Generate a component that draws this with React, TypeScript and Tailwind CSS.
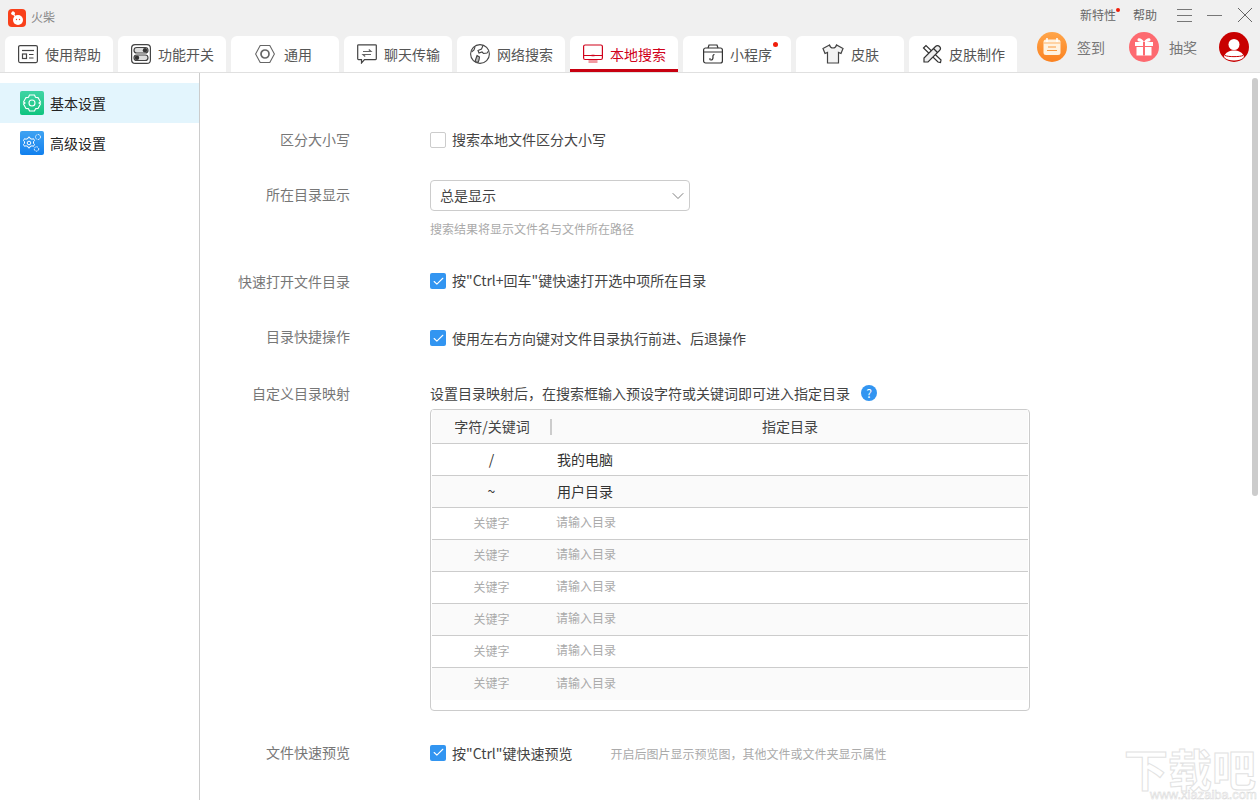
import type { ReactNode } from "react";
import { ChevronDown, Check } from "lucide-react";

const stroke = "#444";

function HelpIcon() {
  return (
    <svg width="20" height="20" viewBox="0 0 20 20" fill="none" stroke={stroke} strokeWidth="1.2">
      <rect x="0.6" y="1.6" width="18.8" height="17" rx="1.5" />
      <path d="M4 6.5h12" />
      <rect x="4.5" y="10" width="4" height="4.5" />
      <path d="M11 10.5h4.5M11 14h4.5" />
    </svg>
  );
}

function SwitchIcon() {
  return (
    <svg width="20" height="20" viewBox="0 0 20 20" fill="none" stroke={stroke} strokeWidth="1.2">
      <rect x="0.6" y="0.6" width="18.8" height="18.8" rx="3.5" />
      <rect x="3" y="3.5" width="14" height="5.5" rx="2.75" fill="#ddd" />
      <rect x="3" y="11" width="14" height="5.5" rx="2.75" fill="#ddd" />
      <circle cx="14" cy="6.2" r="2.2" fill="#333" stroke="none" />
      <circle cx="6" cy="13.8" r="2.2" fill="#333" stroke="none" />
    </svg>
  );
}

function NutIcon() {
  return (
    <svg width="20" height="20" viewBox="0 0 20 20" fill="none" stroke="#666" strokeWidth="1.1" className="mr-[2px] -ml-[4px]">
      <path d="M5.2 1.5h9.6L19.4 10l-4.6 8.500H5.200L.6 10z" />
      <circle cx="10" cy="10" r="4" strokeWidth="1.700" />
    </svg>
  );
}

function ChatIcon() {
  return (
    <svg width="20" height="20" viewBox="0 0 20 20" fill="none" stroke={stroke} strokeWidth="1.2">
      <path d="M1.5.8h17a.8.8 0 0 1 .8.8v13.2a.8.8 0 0 1-.8.8H7.5L4.5 19v-3.4h-3a.8.8 0 0 1-.8-.8V1.6a.8.8 0 0 1 .8-.8z" />
      <path d="M6 7.5h8L11.8 5.5M14 10.5H6l2.2 2" stroke="#666" />
    </svg>
  );
}

function GlobeIcon() {
  return (
    <svg width="20" height="20" viewBox="0 0 20 20" fill="none" stroke={stroke} strokeWidth="1.1">
      <circle cx="10" cy="10" r="9.4" />
      <path d="M13 1.5 11.5 5 8 6.5l1 2.5 3-1 1.500 1.500 3.500-.5L18.500 7" />
      <path d="M7 11.500l2.500 1.500-.5 3-1 2.500-3-1 1-3z" fill="#bbb" />
      <path d="M1.500 8 4 6l1-3" />
    </svg>
  );
}

function MonitorIcon() {
  return (
    <svg width="20" height="20" viewBox="0 0 20 20" fill="none">
      <rect x="0.6" y="1" width="18.8" height="14.500" rx="1.500" stroke="#d0021b" strokeWidth="1.200" />
      <path d="M1 11.500h18" stroke="#d0021b" strokeWidth="1" />
      <path d="M8.500 11.500h3" stroke="#d0021b" strokeWidth="1.500" />
      <rect x="5.500" y="16" width="9" height="3" fill="#f29aa2" />
    </svg>
  );
}

function MiniAppIcon() {
  return (
    <svg width="20" height="20" viewBox="0 0 20 20" fill="none" stroke="#333" strokeWidth="1.200">
      <rect x="0.600" y="4" width="18.800" height="15" rx="2" />
      <path d="M5 4 6 1h8l1 3M1 8h18" />
      <path d="M11.500 10.500c-2 0-1.500 2-1.500 3s-.5 2.500-2 2.500-1.500-1.500-.5-1.500" />
    </svg>
  );
}

function ShirtIcon() {
  return (
    <svg width="22" height="20" viewBox="0 0 22 20" fill="#f3f3f3" stroke="#444" strokeWidth="1.200">
      <path d="M7.500 1 1 4.500l2 5 2.500-1V19h11V8.500l2.500 1 2-5L14.500 1c-.5 2-1.800 3-3.500 3S8 3 7.500 1z" />
    </svg>
  );
}

function ToolsIcon() {
  return (
    <svg width="20" height="20" viewBox="0 0 20 20" fill="none" stroke="#333" strokeWidth="1.200">
      <path d="M1.500 4 4 1.500 19 16l-.5 2.500-2.500-.5z" />
      <path d="M13.500 2.500a2.500 2.500 0 0 1 4 4L6 18H2v-4z" fill="#eee" />
      <path d="M11.500 4.500l4 4" />
    </svg>
  );
}

function Logo() {
  return (
    <svg width="18" height="18" viewBox="0 0 18 18">
      <rect width="18" height="18" rx="4" fill="#f9401a" />
      <circle cx="10" cy="11" r="5" fill="#fff" />
      <rect x="3.500" y="2.500" width="3.500" height="3.500" rx="1.200" fill="#fff" transform="rotate(35 5 4)" />
      <path d="M6 5.500 7.500 8" stroke="#fff" strokeWidth="1.200" />
      <circle cx="8.500" cy="10.500" r=".7" fill="#f9401a" />
      <circle cx="11.500" cy="10.500" r=".7" fill="#f9401a" />
    </svg>
  );
}

function SignIcon() {
  return (
    <svg width="30" height="30" viewBox="0 0 30 30">
      <defs>
        <linearGradient id="signBg" x1="0" y1="0" x2="0" y2="1">
          <stop offset="0" stopColor="#ffa54a" />
          <stop offset="1" stopColor="#fb8220" />
        </linearGradient>
      </defs>
      <circle cx="15" cy="15" r="15" fill="url(#signBg)" />
      <rect x="6.500" y="7.500" width="17" height="15.500" rx="2.500" fill="#fff2e0" />
      <path d="M10 6v4M20 6v4" stroke="#fff" strokeWidth="1.500" />
      <path d="M6.500 11h17" stroke="#ffb469" strokeWidth="1" />
      <path d="M11 15h8M10 18.500h10" stroke="#fb9a3f" strokeWidth="1.200" />
    </svg>
  );
}

function GiftIcon() {
  return (
    <svg width="30" height="30" viewBox="0 0 30 30">
      <circle cx="15" cy="15" r="15" fill="#fd6a70" />
      <rect x="6" y="10" width="18" height="4" fill="#fff" />
      <rect x="7.500" y="15" width="15" height="8.500" fill="#fff" />
      <rect x="14" y="10" width="2" height="13.500" fill="#fd6a70" />
      <path d="M15 10c-2-4-6-4.500-6.500-2.500S11 10 15 10zM15 10c2-4 6-4.500 6.500-2.500S19 10 15 10z" fill="#fff" />
    </svg>
  );
}

function AvatarIcon() {
  return (
    <svg width="30" height="30" viewBox="0 0 30 30">
      <circle cx="15" cy="15" r="15" fill="#c80000" />
      <circle cx="15" cy="12.500" r="5.500" fill="#fff" />
      <path d="M5 25c1-5 6-6.500 10-6.500S24 20 25 25c-2.500 2.600-6 3.500-10 3.500S7.500 27.600 5 25z" fill="#fff" />
      <path d="M6 23.500c3 1.500 15 1.500 18 0" stroke="#c80000" strokeWidth="1" fill="none" />
    </svg>
  );
}

function GearTile({ blue }: { blue?: boolean }) {
  return (
    <div
      className={
        blue
          ? "w-6 h-6 rounded-[2px] bg-gradient-to-b from-[#3fa3f2] to-[#0f80ee] flex items-center justify-center"
          : "w-6 h-6 rounded-[2px] bg-gradient-to-b from-[#3fd4a4] to-[#0cc47f] flex items-center justify-center"
      }
    >
      {blue ? (
        <svg width="22" height="22" viewBox="0 0 22 22" fill="none" stroke="#fff" strokeWidth="1">
          <path d="M8 6.500l2 .7 1.500-.5 1 1.800-1 1.200v1.600l1 1.200-1 1.800-1.500-.5-2 .7-.5 1.500h-1L6 14.500l-2-.7-1.500.5-1-1.800 1-1.200V9.700l-1-1.200 1-1.800 1.500.5 2-.7.500-1.500h1z" transform="translate(1 0)" />
          <circle cx="8" cy="11" r="1.800" />
          <circle cx="17" cy="5" r="2.500" strokeDasharray="1.500 .8" />
          <circle cx="15.500" cy="17" r="2.200" strokeDasharray="1.500 .8" />
        </svg>
      ) : (
        <svg width="20" height="20" viewBox="0 0 20 20" fill="none" stroke="#fff" strokeWidth="1.100">
          <path d="M7.500 2h5l1 2.300 2.500.3 2.500 4.400-1.500 1 1.500 1-2.500 4.400-2.500.3-1 2.300h-5l-1-2.300-2.500-.3L1.500 11 3 10 1.500 9 4 4.600l2.500-.3z" />
          <circle cx="10" cy="10" r="3" />
        </svg>
      )}
    </div>
  );
}

const tabs: { name: string; icon: ReactNode; active?: boolean; dot?: boolean }[] = [
  { name: "使用帮助", icon: <HelpIcon /> },
  { name: "功能开关", icon: <SwitchIcon /> },
  { name: "通用", icon: <NutIcon /> },
  { name: "聊天传输", icon: <ChatIcon /> },
  { name: "网络搜索", icon: <GlobeIcon /> },
  { name: "本地搜索", icon: <MonitorIcon />, active: true },
  { name: "小程序", icon: <MiniAppIcon />, dot: true },
  { name: "皮肤", icon: <ShirtIcon /> },
  { name: "皮肤制作", icon: <ToolsIcon /> },
];

function Tab({ name, icon, active, dot }: (typeof tabs)[number]) {
  return (
    <div
      className={
        active
          ? "relative w-[108px] h-9 rounded-t-[6px] bg-white border-b-[3px] border-[#c80010] text-[#d0021b] flex items-center justify-center gap-[7px] pt-[3px] pl-px text-[14px]"
          : "relative w-[108px] h-9 rounded-t-[6px] bg-white text-[#555] flex items-center justify-center gap-[7px] pl-px text-[14px]"
      }
    >
      {icon}
      <span>{name}</span>
      {dot && <span className="absolute top-[6px] right-[13px] w-[5px] h-[5px] rounded-full bg-[#f01e0a]" />}
    </div>
  );
}

function Box({ checked }: { checked?: boolean }) {
  return checked ? (
    <span className="w-4 h-4 rounded-[2px] bg-[#3295f1] flex items-center justify-center">
      <Check size={13} color="#fff" strokeWidth={2} />
    </span>
  ) : (
    <span className="w-4 h-4 rounded-[2px] border border-[#ccc] bg-white" />
  );
}

function CheckLine({ checked, raised, children }: { checked?: boolean; raised?: boolean; children: ReactNode }) {
  return (
    <div className="flex items-center gap-[6px] h-5 text-[14px] leading-5 text-[#444]">
      <Box checked={checked} />
      <span className={raised ? "pb-[2px]" : ""}>{children}</span>
    </div>
  );
}

function Row({ label, className, labelClass, children }: { label: string; className: string; labelClass?: string; children: ReactNode }) {
  return (
    <div className={"flex items-start " + className}>
      <div className={"w-[150px] text-right text-[14px] text-[#777] " + (labelClass ?? "leading-5")}>{label}</div>
      <div className="ml-[80px]">{children}</div>
    </div>
  );
}

function MapRow({ keyText, dir, filled, shaded, last }: { keyText: string; dir: string; filled?: boolean; shaded?: boolean; last?: boolean }) {
  const tone = shaded ? "bg-[#fafafa]" : "bg-white";
  return (
    <div className={"flex items-center h-8 " + tone + (last ? "" : " border-b border-[#ccc]")}>
      <div className={filled ? "w-[119px] text-center text-[14px] text-[#333]" : "w-[119px] pb-[2px] text-center text-[12px] text-[#aaa]"}>{keyText}</div>
      <div className={filled ? "ml-[6px] text-[14px] text-[#333]" : "ml-[5px] pb-[3px] text-[12px] text-[#aaa]"}>{dir}</div>
    </div>
  );
}

export default function App() {
  return (
    <div className="relative h-[800px] w-[1260px] overflow-hidden bg-white font-['Noto_Sans_CJK_SC','Microsoft_YaHei',sans-serif]">
      <header className="bg-[#f0f0f0] border-b border-[#e0e0e0]">
        <div className="flex items-center h-9 pl-2">
          <Logo />
          <span className="ml-[5px] pb-[2px] text-[12px] text-[#888]">火柴</span>
          <div className="ml-auto flex items-center pb-[6px] text-[12px] text-[#666] pr-2">
            <span className="relative mr-[17px]">
              新特性
              <span className="absolute top-[2px] -right-1 w-[4px] h-[4px] rounded-full bg-[#f01e0a]" />
            </span>
            <span className="mr-5">帮助</span>
            <svg width="15" height="15" viewBox="0 0 15 15" stroke="#777" strokeWidth="1" className="mr-[15px]">
              <path d="M0 1.500h15M0 7.500h15M0 13.500h15" />
            </svg>
            <svg width="15" height="15" viewBox="0 0 15 15" stroke="#777" strokeWidth="1" className="mr-[16px]">
              <path d="M0 7.500h15" />
            </svg>
            <svg width="14" height="14" viewBox="0 0 14 14" stroke="#666" strokeWidth="1">
              <path d="M0 0l14 14M14 0 0 14" />
            </svg>
          </div>
        </div>
        <div className="flex h-9 pl-[5px]">
          <div className="flex gap-[5px]">
            {tabs.map((t) => (
              <Tab key={t.name} {...t} />
            ))}
          </div>
          <div className="flex items-center -mt-1 h-[30px] ml-5 text-[14px] text-[#777]">
            <SignIcon />
            <span className="ml-[10px] mr-6">签到</span>
            <GiftIcon />
            <span className="ml-[10px] mr-[22px]">抽奖</span>
            <AvatarIcon />
          </div>
        </div>
      </header>

      <div className="flex h-[727px]">
        <aside className="w-[200px] shrink-0 border-r border-[#ccc] pt-[10px] text-[14px] text-[#222]">
          <div className="flex items-center h-10 pl-5 gap-[6px] bg-[#e3f5fd]">
            <GearTile />
            <span>基本设置</span>
          </div>
          <div className="flex items-center h-10 pl-5 gap-[6px]">
            <GearTile blue />
            <span>高级设置</span>
          </div>
        </aside>

        <main className="flex-1 pt-[57px]">
          <Row label="区分大小写" className="" labelClass="leading-[18px]">
            <CheckLine raised>搜索本地文件区分大小写</CheckLine>
          </Row>

          <Row label="所在目录显示" className="mt-[30px]" labelClass="leading-[29px]">
            <div className="flex items-center justify-between w-[260px] h-[31px] px-[9px] rounded-[4px] border border-[#ccc] text-[14px] text-[#444]">
              <span>总是显示</span>
              <ChevronDown size={20} color="#666" strokeWidth={1} className="-mr-[8px]" />
            </div>
            <p className="mt-[9px] text-[12px] leading-[18px] text-[#aaa]">搜索结果将显示文件名与文件所在路径</p>
          </Row>

          <Row label="快速打开文件目录" className="mt-[33px]">
            <CheckLine checked raised>按"Ctrl+回车"键快速打开选中项所在目录</CheckLine>
          </Row>

          <Row label="目录快捷操作" className="mt-[37px]" labelClass="leading-[16px]">
            <CheckLine checked>使用左右方向键对文件目录执行前进、后退操作</CheckLine>
          </Row>

          <Row label="自定义目录映射" className="mt-[35px]">
            <div className="flex items-center h-5 text-[14px] leading-5 text-[#444]">
              <span>设置目录映射后，在搜索框输入预设字符或关键词即可进入指定目录</span>
              <span className="ml-[11px] w-4 h-4 rounded-full bg-[#3295f1] text-white text-[12px] leading-4 text-center">?</span>
            </div>
            <div className="mt-[6px] w-[600px] h-[302px] rounded-[4px] border border-[#ccc] px-[1px]">
              <div className="flex items-center h-[34px] border-b border-[#ccc] bg-[#fafafa] text-[14px] text-[#444]">
                <div className="w-[118px] pl-[2px] text-center">字符/关键词</div>
                <div className="w-[2px] h-4 bg-[#ccc]" />
                <div className="flex-1 text-center">指定目录</div>
              </div>
              <MapRow filled keyText="/" dir="我的电脑" />
              <MapRow filled shaded keyText="~" dir="用户目录" />
              <MapRow keyText="关键字" dir="请输入目录" />
              <MapRow shaded keyText="关键字" dir="请输入目录" />
              <MapRow keyText="关键字" dir="请输入目录" />
              <MapRow shaded keyText="关键字" dir="请输入目录" />
              <MapRow keyText="关键字" dir="请输入目录" />
              <MapRow shaded last keyText="关键字" dir="请输入目录" />
            </div>
          </Row>

          <Row label="文件快速预览" className="mt-[31px]">
            <div className="flex items-center">
              <CheckLine checked>按"Ctrl"键快速预览</CheckLine>
              <span className="ml-[38px] pt-[3px] text-[12px] text-[#aaa]">开启后图片显示预览图，其他文件或文件夹显示属性</span>
            </div>
          </Row>
        </main>
      </div>

      {/* scrollbar thumb */}
      <div className="absolute top-[78px] left-[1252px] w-[6px] h-[418px] rounded-[3px] bg-[#ccc]" />

      {/* watermark */}
      <div className="absolute left-[1124px] top-[746px] w-[136px] pointer-events-none text-transparent">
        <div className="text-[44px] leading-[44px] font-bold whitespace-nowrap [-webkit-text-stroke:1px_#e2e2e2]">下载吧</div>
        <div className="ml-[26px] text-[13px] leading-[10px] font-['Liberation_Sans',sans-serif] whitespace-nowrap [-webkit-text-stroke:0.5px_#d8d8d8]">www.xiazaiba.com</div>
      </div>
    </div>
  );
}
